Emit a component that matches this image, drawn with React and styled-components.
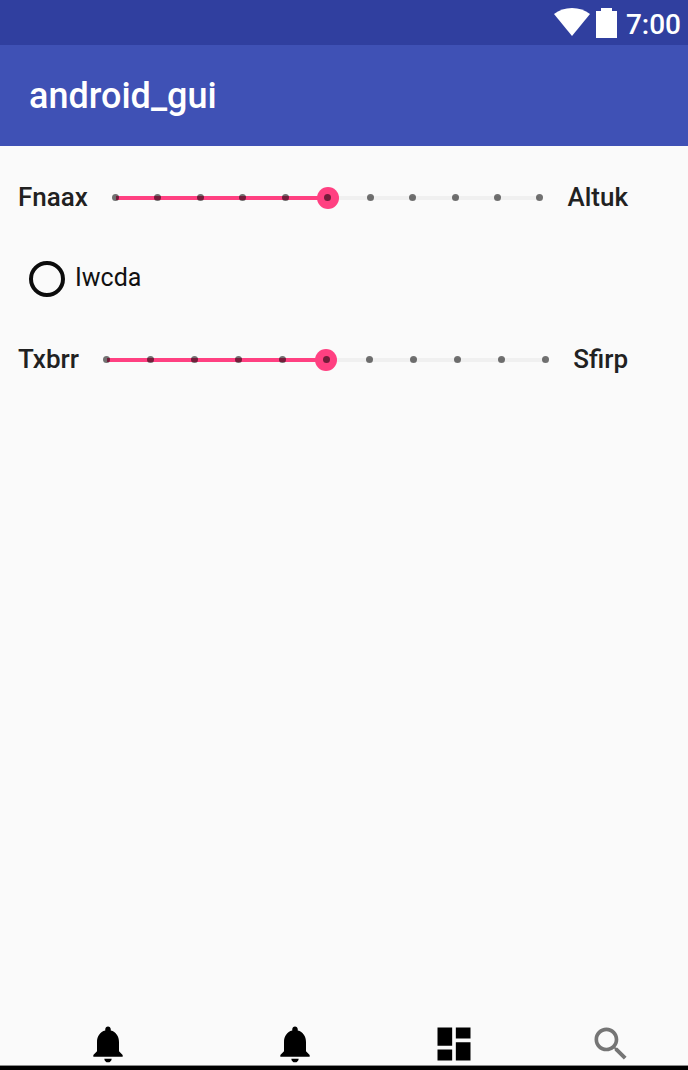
import React, { useState } from 'react';
import styled, { createGlobalStyle } from 'styled-components';

const GlobalStyle = createGlobalStyle`
  * { box-sizing: border-box; }
  body {
    margin: 0;
    background: #fafafa;
    font-family: Roboto, sans-serif;
  }
`;

const Screen = styled.div`
  display: flex;
  flex-direction: column;
  min-height: 100vh;
`;

const StatusBar = styled.div`
  display: flex;
  align-items: center;
  justify-content: flex-end;
  gap: 6px;
  height: 45px;
  padding: 0 7px;
  background: #303f9f;
  color: #fff;
`;

const Clock = styled.time`
  margin-left: 3px;
  padding-top: 4px;
  font-size: 28px;
  line-height: 32px;
  font-weight: 500;
`;

const AppBar = styled.header`
  display: flex;
  align-items: center;
  height: 101px;
  padding: 0 29px;
  background: #3f51b5;
  color: #fff;
`;

const Title = styled.h1`
  margin: 0;
  font-size: 36px;
  line-height: 44px;
  font-weight: 500;
`;

const Content = styled.main`
  flex: 1;
  padding: 11px 60px 0 18px;
`;

const Row = styled.div`
  display: flex;
  align-items: center;
  height: 81px;
`;

const SliderRow = styled(Row)`
  gap: 17px;
`;

const SliderLabel = styled.label`
  font-size: 26px;
  line-height: 32px;
  font-weight: 500;
  color: #212121;
  padding-bottom: 2px;
`;

const SliderBox = styled.div`
  position: relative;
  flex: 1;
  min-width: 0;
  height: 22px;
`;

const RangeInput = styled.input`
  appearance: none;
  display: block;
  width: 100%;
  height: 22px;
  margin: 0;
  background: transparent;

  &::-webkit-slider-runnable-track {
    height: 4px;
    background: linear-gradient(
      to right,
      transparent 11px,
      #ff4081 11px,
      #ff4081 var(--fill),
      #f0f0f0 var(--fill),
      #f0f0f0 calc(100% - 11px),
      transparent calc(100% - 11px)
    );
  }

  &::-webkit-slider-thumb {
    appearance: none;
    width: 22px;
    height: 22px;
    margin-top: -9px;
    border-radius: 50%;
    background: #ff4081;
  }
`;

const Ticks = styled.div`
  position: absolute;
  inset: 0;
  display: flex;
  align-items: center;
  justify-content: space-between;
  padding: 0 7px;
  pointer-events: none;
`;

const Tick = styled.span`
  width: 7px;
  height: 7px;
  background: rgba(0, 0, 0, 0.55);
  border-radius: 50%;
`;

const RadioRow = styled(Row)`
  gap: 10px;
  padding-left: 11px;
`;

const RadioInput = styled.input`
  appearance: none;
  width: 36px;
  height: 36px;
  margin: 0;
  border: 4px solid #0c0c0c;
  border-radius: 50%;

  &:checked {
    background: radial-gradient(circle, #0c0c0c 8px, transparent 9px);
  }
`;

const RadioLabel = styled.label`
  font-size: 25px;
  line-height: 32px;
  color: #111;
  padding-bottom: 2px;
`;

const BottomNav = styled.nav`
  display: grid;
  grid-template-columns: 216fr 158fr 160fr 154fr;
  justify-items: center;
  border-bottom: 4px solid #000;
  box-shadow: inset 0 -1px #8c8c8c;
`;

const NavButton = styled.button`
  display: block;
  padding: 0;
  border: 0;
  background: none;
  color: ${(p) => (p.$muted ? '#757575' : '#000')};
  line-height: 0;
`;

const NavIcon = styled.svg`
  width: 44px;
  height: 44px;
  fill: currentColor;
`;

const BELL =
  'M12 22c1.1 0 2-.9 2-2h-4c0 1.1.9 2 2 2zm6-6v-5c0-3.07-1.64-5.64-4.5-6.32V4c0-.83-.67-1.5-1.5-1.5s-1.5.67-1.5 1.5v.68C7.63 5.36 6 7.92 6 11v5l-2 2v1h16v-1l-2-2z';
const DASHBOARD = 'M3 13h8V3H3v10zm0 8h8v-6H3v6zm10 0h8V11h-8v10zm0-18v6h8V3h-8z';
const SEARCH =
  'M15.5 14h-.79l-.28-.27C15.41 12.59 16 11.11 16 9.5 16 5.91 13.09 3 9.5 3S3 5.91 3 9.5 5.91 16 9.5 16c1.61 0 3.09-.59 4.23-1.57l.27.28v.79l5 4.99L20.49 19l-4.99-5zm-6 0C7.01 14 5 11.99 5 9.5S7.01 5 9.5 5 14 7.01 14 9.5 11.99 14 9.5 14z';

const NAV_ITEMS = [
  { name: 'Notifications', path: BELL },
  { name: 'Alerts', path: BELL },
  { name: 'Dashboard', path: DASHBOARD },
  { name: 'Search', path: SEARCH, muted: true },
];

const MAX = 10;

function Slider({ id, start, end }) {
  const [value, setValue] = useState(5);
  return (
    <SliderRow>
      <SliderLabel htmlFor={id}>{start}</SliderLabel>
      <SliderBox>
        <RangeInput
          id={id}
          type="range"
          min={0}
          max={MAX}
          value={value}
          onChange={(e) => setValue(Number(e.target.value))}
          style={{ '--fill': `calc(11px + (100% - 22px) * ${value / MAX})` }}
        />
        <Ticks aria-hidden="true">
          {Array.from({ length: MAX + 1 }, (_, i) => (
            <Tick key={i} />
          ))}
        </Ticks>
      </SliderBox>
      <SliderLabel htmlFor={id}>{end}</SliderLabel>
    </SliderRow>
  );
}

export default function App() {
  return (
    <Screen>
      <GlobalStyle />
      <StatusBar>
        <svg width="36" height="29" viewBox="0 0 36 29" fill="#fff" aria-hidden="true">
          <path d="M0 6C5 2 11 0 18 0S31 2 36 6L18 28z" />
        </svg>
        <svg width="21" height="30" viewBox="0 0 21 30" fill="#fff" aria-hidden="true">
          <path d="M5 0h11v3h5v27H0V3h5z" />
        </svg>
        <Clock>7:00</Clock>
      </StatusBar>
      <AppBar>
        <Title>android_gui</Title>
      </AppBar>
      <Content>
        <Slider id="slider-top" start="Fnaax" end="Altuk" />
        <RadioRow>
          <RadioInput type="radio" id="option" name="option" />
          <RadioLabel htmlFor="option">Iwcda</RadioLabel>
        </RadioRow>
        <Slider id="slider-bottom" start="Txbrr" end="Sfirp" />
      </Content>
      <BottomNav>
        {NAV_ITEMS.map((item) => (
          <NavButton key={item.name} type="button" aria-label={item.name} $muted={item.muted}>
            <NavIcon viewBox="0 0 24 24" aria-hidden="true">
              <path d={item.path} />
            </NavIcon>
          </NavButton>
        ))}
      </BottomNav>
    </Screen>
  );
}
